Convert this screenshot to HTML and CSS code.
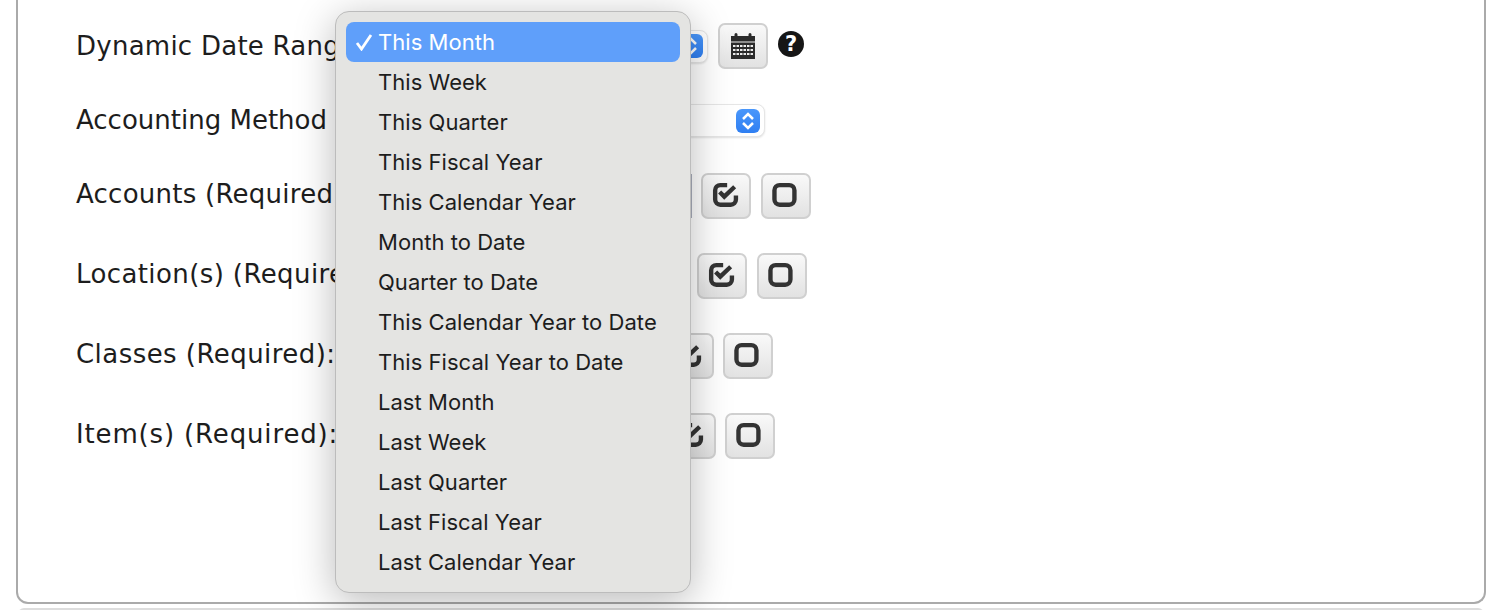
FILE: index.html
```html
<!DOCTYPE html>
<html lang="en">
<head>
  <meta charset="UTF-8">
  <title>Report Options</title>
  <link rel="stylesheet" href="styles.css">
</head>
<body>
  <div class="panel">
    <div class="row row-date">
      <label class="row-label">Dynamic Date Range:</label>
      <div class="select select-date"><span class="stepper"><svg viewBox="0 0 24 24"><path d="M7 10l5-5 5 5M7 14l5 5 5-5"/></svg></span></div>
      <button class="icon-button">
        <svg class="calendar" viewBox="0 0 24 26"><path d="M0 3h3.500V1.500a1.500 1.500 0 0 1 3 0V3h11V1.500a1.500 1.500 0 0 1 3 0V3H24v5.500H0z"/><path fill-rule="evenodd" d="M0 9.500h24V26H0zM2 12v2h2.500v-2zM5.500 12v2h2.500v-2zM9 12v2h2.500v-2zM12.500 12v2h2.500v-2zM16 12v2h2.500v-2zM19.500 12v2h2.500v-2zM2 16v2h2.500v-2zM5.500 16v2h2.500v-2zM9 16v2h2.500v-2zM12.500 16v2h2.500v-2zM16 16v2h2.500v-2zM19.500 16v2h2.500v-2zM2 20v2h2.500v-2zM5.500 20v2h2.500v-2zM9 20v2h2.500v-2zM12.500 20v2h2.500v-2zM16 20v2h2.500v-2zM19.500 20v2h2.500v-2z"/></svg>
      </button>
      <span class="help">?</span>
    </div>
    <div class="row row-method">
      <label class="row-label">Accounting Method</label>
      <div class="select select-method"><span class="stepper"><svg viewBox="0 0 24 24"><path d="M7 10l5-5 5 5M7 14l5 5 5-5"/></svg></span></div>
    </div>
    <div class="row">
      <label class="row-label">Accounts (Required):</label>
      <div class="listbox listbox-accounts"></div>
      <button class="icon-button"><svg class="toggle" viewBox="0 0 26 26"><path d="M14 3.600H8.100a4.500 4.500 0 0 0-4.500 4.500v8a4.500 4.500 0 0 0 4.500 4.500h9a4.500 4.500 0 0 0 4.500-4.500v-3.600"/><path d="M7.500 9.500l4 4 9-8.500"/></svg></button>
      <button class="icon-button"><svg class="toggle" viewBox="0 0 26 26"><rect x="3" y="3.600" width="17.300" height="17" rx="4.500"/></svg></button>
    </div>
    <div class="row row-locations">
      <label class="row-label">Location(s) (Required):</label>
      <div class="listbox listbox-locations"></div>
      <button class="icon-button"><svg class="toggle" viewBox="0 0 26 26"><path d="M14 3.600H8.100a4.500 4.500 0 0 0-4.500 4.500v8a4.500 4.500 0 0 0 4.500 4.500h9a4.500 4.500 0 0 0 4.500-4.500v-3.600"/><path d="M7.500 9.500l4 4 9-8.500"/></svg></button>
      <button class="icon-button"><svg class="toggle" viewBox="0 0 26 26"><rect x="3" y="3.600" width="17.300" height="17" rx="4.500"/></svg></button>
    </div>
    <div class="row row-classes">
      <label class="row-label">Classes (Required):</label>
      <div class="listbox listbox-classes"></div>
      <button class="icon-button"><svg class="toggle" viewBox="0 0 26 26"><path d="M14 3.600H8.100a4.500 4.500 0 0 0-4.500 4.500v8a4.500 4.500 0 0 0 4.500 4.500h9a4.500 4.500 0 0 0 4.500-4.500v-3.600"/><path d="M7.500 9.500l4 4 9-8.500"/></svg></button>
      <button class="icon-button"><svg class="toggle" viewBox="0 0 26 26"><rect x="3" y="3.600" width="17.300" height="17" rx="4.500"/></svg></button>
    </div>
    <div class="row row-items">
      <label class="row-label">Item(s) (Required):</label>
      <div class="listbox listbox-items"></div>
      <button class="icon-button"><svg class="toggle" viewBox="0 0 26 26"><path d="M14 3.600H8.100a4.500 4.500 0 0 0-4.500 4.500v8a4.500 4.500 0 0 0 4.500 4.500h9a4.500 4.500 0 0 0 4.500-4.500v-3.600"/><path d="M7.500 9.500l4 4 9-8.500"/></svg></button>
      <button class="icon-button"><svg class="toggle" viewBox="0 0 26 26"><rect x="3" y="3.600" width="17.300" height="17" rx="4.500"/></svg></button>
    </div>
  </div>
  <div class="next-panel"></div>

  <ul class="dropdown">
    <li class="dropdown-item selected"><svg class="tick" viewBox="0 0 18 18"><path d="M2 10l4.500 6L16 2"/></svg>This Month</li>
    <li class="dropdown-item">This Week</li>
    <li class="dropdown-item">This Quarter</li>
    <li class="dropdown-item">This Fiscal Year</li>
    <li class="dropdown-item">This Calendar Year</li>
    <li class="dropdown-item">Month to Date</li>
    <li class="dropdown-item">Quarter to Date</li>
    <li class="dropdown-item">This Calendar Year to Date</li>
    <li class="dropdown-item">This Fiscal Year to Date</li>
    <li class="dropdown-item">Last Month</li>
    <li class="dropdown-item">Last Week</li>
    <li class="dropdown-item">Last Quarter</li>
    <li class="dropdown-item">Last Fiscal Year</li>
    <li class="dropdown-item">Last Calendar Year</li>
  </ul>
</body>
</html>
```

FILE: styles.css
```css
html, body {
  margin: 0;
  height: 610px;
  overflow: hidden;
  background: #fff;
  color: #1d1d1d;
  font-family: "DejaVu Sans", sans-serif;
}
.panel {
  box-sizing: border-box;
  height: 604px;
  margin: 0 10px 0 16px;
  padding: 23px 58px 0;
  border: 2px solid #aaa;
  border-top: none;
  border-radius: 0 0 12px 12px;
}
.next-panel {
  height: 10px;
  margin: 4px 12px 0 18px;
  background: #ddd;
  border-radius: 6px 6px 0 0;
}
.row {
  display: flex;
  align-items: center;
  height: 46px;
  margin-bottom: 34px;
}
.row-date {
  margin-bottom: 35px;
}
.row-method {
  height: 33px;
  margin-bottom: 36px;
}
.row-label {
  flex: none;
  width: 264px;
  padding-bottom: 5px;
  font-size: 26px;
  letter-spacing: 0.25px;
  white-space: nowrap;
}
.row-date .row-label,
.row-method .row-label {
  padding-bottom: 1px;
}
.row-method .row-label {
  letter-spacing: 0;
}
.row-locations .row-label {
  letter-spacing: 0.4px;
}
.row-classes .row-label {
  letter-spacing: 0.45px;
}
.row-items .row-label {
  letter-spacing: 0.85px;
}
.select {
  box-sizing: border-box;
  display: flex;
  justify-content: flex-end;
  align-items: center;
  height: 33px;
  padding-right: 4px;
  background: #fff;
  border: 1px solid #e6e6e6;
  border-radius: 8px;
  box-shadow: 0 1px 2px rgba(0,0,0,0.12);
}
.select-date {
  width: 368px;
}
.select-method {
  width: 425px;
}
.stepper {
  display: block;
  width: 24px;
  height: 24px;
  background: linear-gradient(#4a97fb, #2f7ff2);
  border-radius: 6px;
}
.stepper svg {
  display: block;
  fill: none;
  stroke: #fff;
  stroke-width: 2.500;
}
.listbox {
  box-sizing: border-box;
  height: 44px;
  border: 1px solid #a9aebb;
}
.listbox-accounts {
  width: 351.500px;
}
.listbox-locations {
  width: 347.500px;
}
.listbox-classes {
  width: 314px;
}
.listbox-items {
  width: 316px;
}
.icon-button {
  box-sizing: border-box;
  display: flex;
  justify-content: center;
  align-items: center;
  width: 50px;
  height: 46px;
  margin-left: 9.500px;
  padding: 0;
  background: linear-gradient(#f9f9f9, #e2e2e2);
  border: 2px solid #d0d0d0;
  border-radius: 7px;
}
.calendar {
  width: 24px;
  height: 26px;
  fill: #2b2b2b;
}
.toggle {
  width: 30px;
  height: 30px;
  fill: none;
  stroke: #333;
  stroke-width: 3.800;
}
.help {
  flex: none;
  width: 26px;
  height: 26px;
  margin: -4px 0 0 10.500px;
  background: #161616;
  border-radius: 50%;
  color: #fff;
  font-size: 21px;
  font-weight: bold;
  line-height: 26px;
  text-align: center;
}
.dropdown {
  box-sizing: border-box;
  position: absolute;
  left: 335px;
  top: 11px;
  width: 356px;
  height: 582px;
  margin: 0;
  padding: 10px;
  list-style: none;
  background: #e4e4e2;
  border: 1px solid #bcbcbc;
  border-radius: 14px;
  box-shadow: 0 8px 40px rgba(0,0,0,0.28);
  font-family: Inter, sans-serif;
  font-size: 22px;
  letter-spacing: 0.04px;
}
.dropdown-item {
  position: relative;
  height: 40px;
  padding-left: 32px;
  line-height: 40px;
  border-radius: 8px;
  white-space: nowrap;
}
.dropdown-item.selected {
  background: #5f9ffa;
  color: #fff;
}
.tick {
  position: absolute;
  left: 9px;
  top: 11px;
  width: 18px;
  height: 18px;
  fill: none;
  stroke: #fff;
  stroke-width: 2.800;
}
```
